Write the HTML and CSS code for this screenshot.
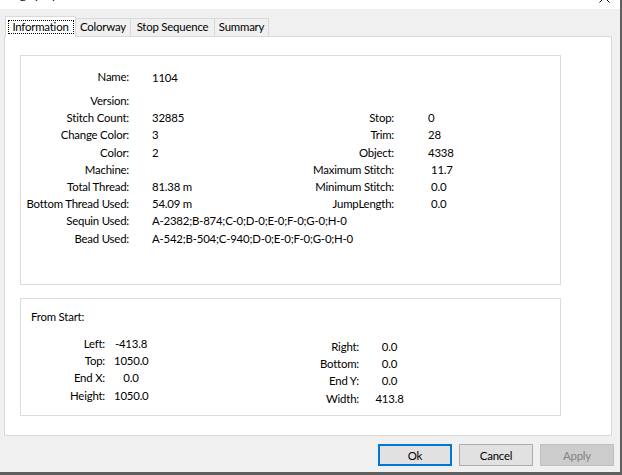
FILE: index.html
```html
<!DOCTYPE html>
<html>
<head>
<meta charset="utf-8">
<link rel="stylesheet" href="styles.css">
</head>
<body>
<div class="window">
  <div class="titlebar">
    <span class="title">Design properties</span>
    <svg class="close" width="11" height="11" viewBox="0 0 11 11"><path d="M0.5 0.5 L10.5 10.5 M10.5 0.5 L0.5 10.5" stroke="#000" stroke-width="1" fill="none"/></svg>
  </div>
  <div class="body">
    <div class="tabs">
      <div class="tab active t1"><span class="focus">Information</span></div>
      <div class="tab t2">Colorway</div>
      <div class="tab t3">Stop Sequence</div>
      <div class="tab t4">Summary</div>
    </div>
    <div class="panel">
      <div class="group info">
        <div class="grid">
          <div class="l top">Name:</div><div class="v top name">1104</div><div></div><div></div>
          <div class="l">Version:</div><div class="v"></div><div></div><div></div>
          <div class="l">Stitch Count:</div><div class="v">32885</div><div class="l">Stop:</div><div class="v2">0</div>
          <div class="l">Change Color:</div><div class="v">3</div><div class="l">Trim:</div><div class="v2">28</div>
          <div class="l">Color:</div><div class="v">2</div><div class="l">Object:</div><div class="v2">4338</div>
          <div class="l">Machine:</div><div class="v"></div><div class="l">Maximum Stitch:</div><div class="v2 sh">11.7</div>
          <div class="l">Total Thread:</div><div class="v">81.38 m</div><div class="l">Minimum Stitch:</div><div class="v2 sh">0.0</div>
          <div class="l">Bottom Thread Used:</div><div class="v">54.09 m</div><div class="l">JumpLength:</div><div class="v2 sh">0.0</div>
          <div class="l">Sequin Used:</div><div class="v wide">A-2382;B-874;C-0;D-0;E-0;F-0;G-0;H-0</div>
          <div class="l">Bead Used:</div><div class="v wide">A-542;B-504;C-940;D-0;E-0;F-0;G-0;H-0</div>
        </div>
      </div>
      <div class="group start">
        <div class="caption">From Start:</div>
        <div class="cols">
          <div class="sgrid left">
            <div class="l">Left:</div><div class="c">-413.8</div>
            <div class="l">Top:</div><div class="c">1050.0</div>
            <div class="l">End X:</div><div class="c">0.0</div>
            <div class="l">Height:</div><div class="c">1050.0</div>
          </div>
          <div class="sgrid right">
            <div class="l">Right:</div><div class="c">0.0</div>
            <div class="l">Bottom:</div><div class="c">0.0</div>
            <div class="l">End Y:</div><div class="c">0.0</div>
            <div class="l">Width:</div><div class="c">413.8</div>
          </div>
        </div>
      </div>
    </div>
    <div class="buttons">
      <div class="btn ok">Ok</div>
      <div class="btn">Cancel</div>
      <div class="btn disabled">Apply</div>
    </div>
  </div>
</div>
</body>
</html>
```

FILE: styles.css
```css
html, body {
  margin: 0;
  padding: 0;
}
body {
  width: 622px;
  height: 475px;
  overflow: hidden;
  font-family: Lato, "Liberation Sans", sans-serif;
  font-size: 11.4px;
  letter-spacing: -0.2px;
  color: #000;
  background: #f0f0f0;
}
.window {
  width: 620px;
  height: 472px;
  border-right: 2px solid #5f5f5f;
  border-bottom: 3px solid #5f5f5f;
  display: flex;
  flex-direction: column;
  background: #f0f0f0;
}
.titlebar {
  height: 9px;
  flex: none;
  background: #fff;
  overflow: hidden;
  display: flex;
  justify-content: space-between;
  align-items: flex-start;
}
.title {
  margin-top: -13px;
  margin-left: -3px;
  line-height: 15px;
  font-size: 12px;
}
.close {
  margin-top: -8px;
  margin-right: 10px;
}
.body {
  flex: 1;
  display: flex;
  flex-direction: column;
}
.tabs {
  display: flex;
  align-items: flex-end;
  margin-top: 7px;
  margin-left: 5px;
  height: 20px;
}
.tab {
  box-sizing: border-box;
  height: 18px;
  border: 1px solid #d9d9d9;
  border-bottom: none;
  background: #f0f0f0;
  margin-left: -1px;
  display: flex;
  align-items: center;
  justify-content: center;
  line-height: 14px;
  padding-bottom: 1px;
}
.tab.active {
  position: relative;
  z-index: 1;
  height: 21px;
  margin-bottom: -1px;
  margin-left: 0;
  background: #fff;
  padding-bottom: 2px;
}
.t1 { width: 71px; }
.t2 { width: 56px; }
.t3 { width: 85px; }
.t4 { width: 55px; }
.focus {
  box-sizing: border-box;
  width: 66px;
  height: 14px;
  border: 1px dotted #000;
  display: flex;
  align-items: center;
  justify-content: center;
  margin-top: 2px;
}
.panel {
  box-sizing: border-box;
  margin-left: 4px;
  width: 608px;
  height: 400px;
  background: #fff;
  border: 1px solid #d9d9d9;
  display: flex;
  flex-direction: column;
}
.group {
  box-sizing: border-box;
  width: 541px;
  margin-left: 15px;
  border: 1px solid #dcdcdc;
}
.info {
  margin-top: 18px;
  height: 230px;
  padding-top: 12px;
}
.grid {
  display: grid;
  grid-template-columns: 108px 173px 92px 1fr;
  grid-template-rows: 24px repeat(9, 17.2px);
  align-items: center;
  white-space: nowrap;
}
.l {
  text-align: right;
}
.top {
  align-self: start;
  line-height: 17px;
}
.name {
  padding-top: 1px;
}
.v {
  padding-left: 23px;
}
.v2 {
  padding-left: 34px;
}
.v2.sh {
  padding-left: 37px;
}
.wide {
  grid-column: span 3;
}
.start {
  margin-top: 13px;
  height: 118px;
  padding: 9px 0 0 10px;
}
.caption {
  line-height: 17px;
}
.cols {
  display: flex;
  align-items: flex-start;
  margin-top: 10px;
}
.sgrid {
  display: grid;
  grid-auto-rows: 17.2px;
  align-items: center;
  white-space: nowrap;
}
.left {
  grid-template-columns: 74px 34px;
  column-gap: 9px;
}
.right {
  grid-template-columns: 60px 35px;
  column-gap: 13px;
  margin-left: 151px;
  margin-top: 3px;
}
.c {
  text-align: center;
}
.buttons {
  display: flex;
  justify-content: flex-end;
  gap: 7px;
  padding-right: 6px;
  margin-top: 8px;
}
.btn {
  box-sizing: border-box;
  width: 74px;
  height: 22px;
  background: #e1e1e1;
  border: 1px solid #adadad;
  display: flex;
  align-items: center;
  justify-content: center;
}
.btn.ok {
  border: 2px solid #0078d7;
}
.btn.disabled {
  background: #cccccc;
  border-color: #bfbfbf;
  color: #838383;
}
```
